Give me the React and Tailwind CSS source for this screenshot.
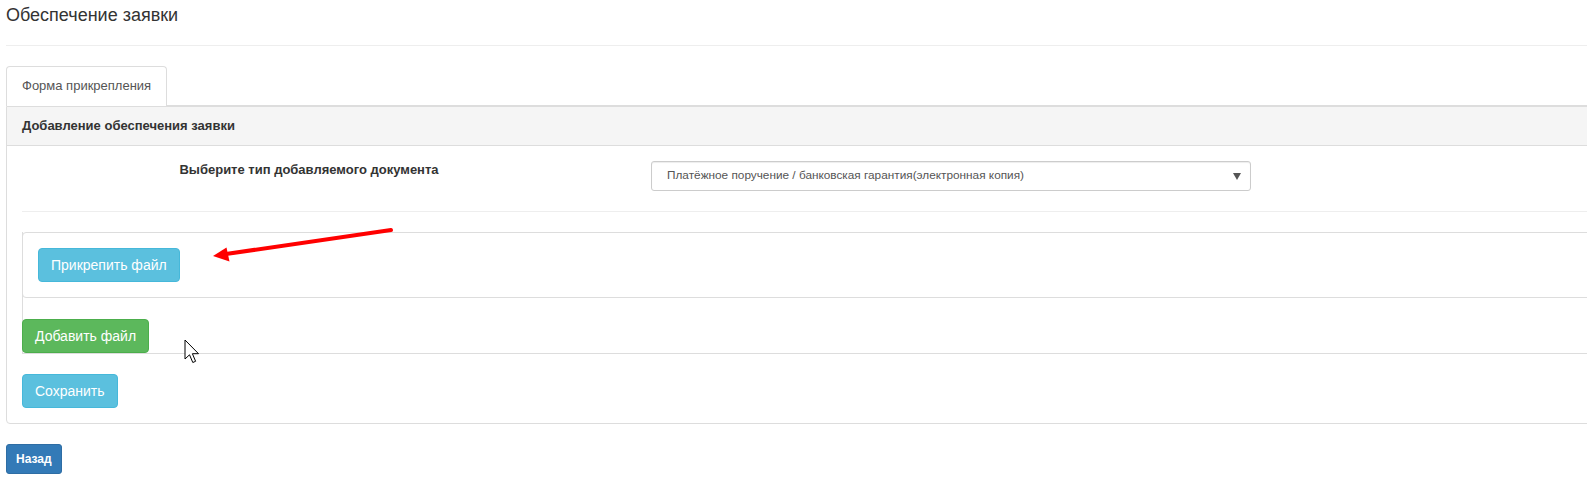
export default function App() {
  return (
    <div className="relative h-[494px] w-full overflow-hidden bg-white font-['Liberation_Sans',Arial,sans-serif] text-[#333]">
      <div className="w-[1700px] pl-[6px]">
        <h1 className="pt-[5px] text-[18px] font-normal leading-[20px] text-[#333]">Обеспечение заявки</h1>
        <div className="mt-[20px] h-px bg-[#eee]" />

        <div className="mt-[20px] flex border-b border-[#ddd]">
          <div className="-mb-px rounded-t-[4px] border border-b-0 border-[#ddd] bg-white px-[15px] pb-[10px] pt-[9px] text-[13px] leading-[20px] text-[#555]">
            Форма прикрепления
          </div>
        </div>

        <div className="rounded-b-[4px] border border-[#ddd] bg-white">
          <div className="border-b border-[#ddd] bg-[#f5f5f5] px-[15px] py-[10px] text-[13px] font-bold leading-[18px] text-[#333]">
            Добавление обеспечения заявки
          </div>
          <div className="flex flex-col items-start px-[15px] pb-[15px] pt-[15px]">
            <div className="flex w-full items-start">
              <div className="w-[574px] shrink-0 text-center text-[13px] font-bold leading-[18px] text-[#333]">
                Выберите тип добавляемого документа
              </div>
              <div className="ml-[55px] flex h-[30px] w-[600px] shrink-0 items-center rounded-[3px] border border-[#ccc] bg-white pl-[15px] pr-[9px] text-[11.8px] text-[#555] shadow-[inset_0_1px_1px_rgba(0,0,0,0.075)]">
                <span className="flex-1">Платёжное поручение / банковская гарантия(электронная копия)</span>
                <svg width="8" height="8" viewBox="0 0 8 8">
                  <polygon points="0,1 8,1 4,8" fill="#555" />
                </svg>
              </div>
            </div>

            <div className="mt-[20px] h-px w-full bg-[#eee]" />

            <div className="mt-[20px] flex w-full flex-col items-start border-b border-l border-[#ddd]">
              <div className="-ml-px w-[calc(100%+1px)] rounded-[4px] border border-[#ddd] p-[15px]">
                <button className="rounded-[4px] border border-[#46b8da] bg-[#5bc0de] px-[12px] py-[6px] text-[14px] leading-[20px] text-white">
                  Прикрепить файл
                </button>
              </div>
              <button className="-ml-px mt-[21px] rounded-[4px] border border-[#4cae4c] bg-[#5cb85c] px-[12px] py-[6px] text-[14px] leading-[20px] text-white">
                Добавить файл
              </button>
            </div>

            <button className="mt-[20px] rounded-[4px] border border-[#46b8da] bg-[#5bc0de] px-[12px] py-[6px] text-[14px] leading-[20px] text-white">
              Сохранить
            </button>
          </div>
        </div>

        <div className="mt-[20px]">
          <button className="rounded-[3px] border border-[#2e6da4] bg-[#337ab7] px-[9px] py-[5px] text-[12px] font-bold leading-[18px] text-white">
            Назад
          </button>
        </div>
      </div>

      <svg className="pointer-events-none absolute left-0 top-0" width="1587" height="494">
        <line x1="391" y1="230" x2="226" y2="254" stroke="#f00" strokeWidth="4" strokeLinecap="round" />
        <polygon points="213,256 226.5,247.5 229.5,261.5" fill="#f00" />
      </svg>

      <svg className="pointer-events-none absolute left-[184px] top-[339px]" width="16" height="26" viewBox="0 0 16 26">
        <path d="M1 1 L1 20 L5.5 15.8 L8.8 23.5 L11.6 22.3 L8.4 14.7 L14.5 14.7 Z" fill="#fff" stroke="#000" strokeWidth="1" strokeLinejoin="round" />
      </svg>
    </div>
  );
}
